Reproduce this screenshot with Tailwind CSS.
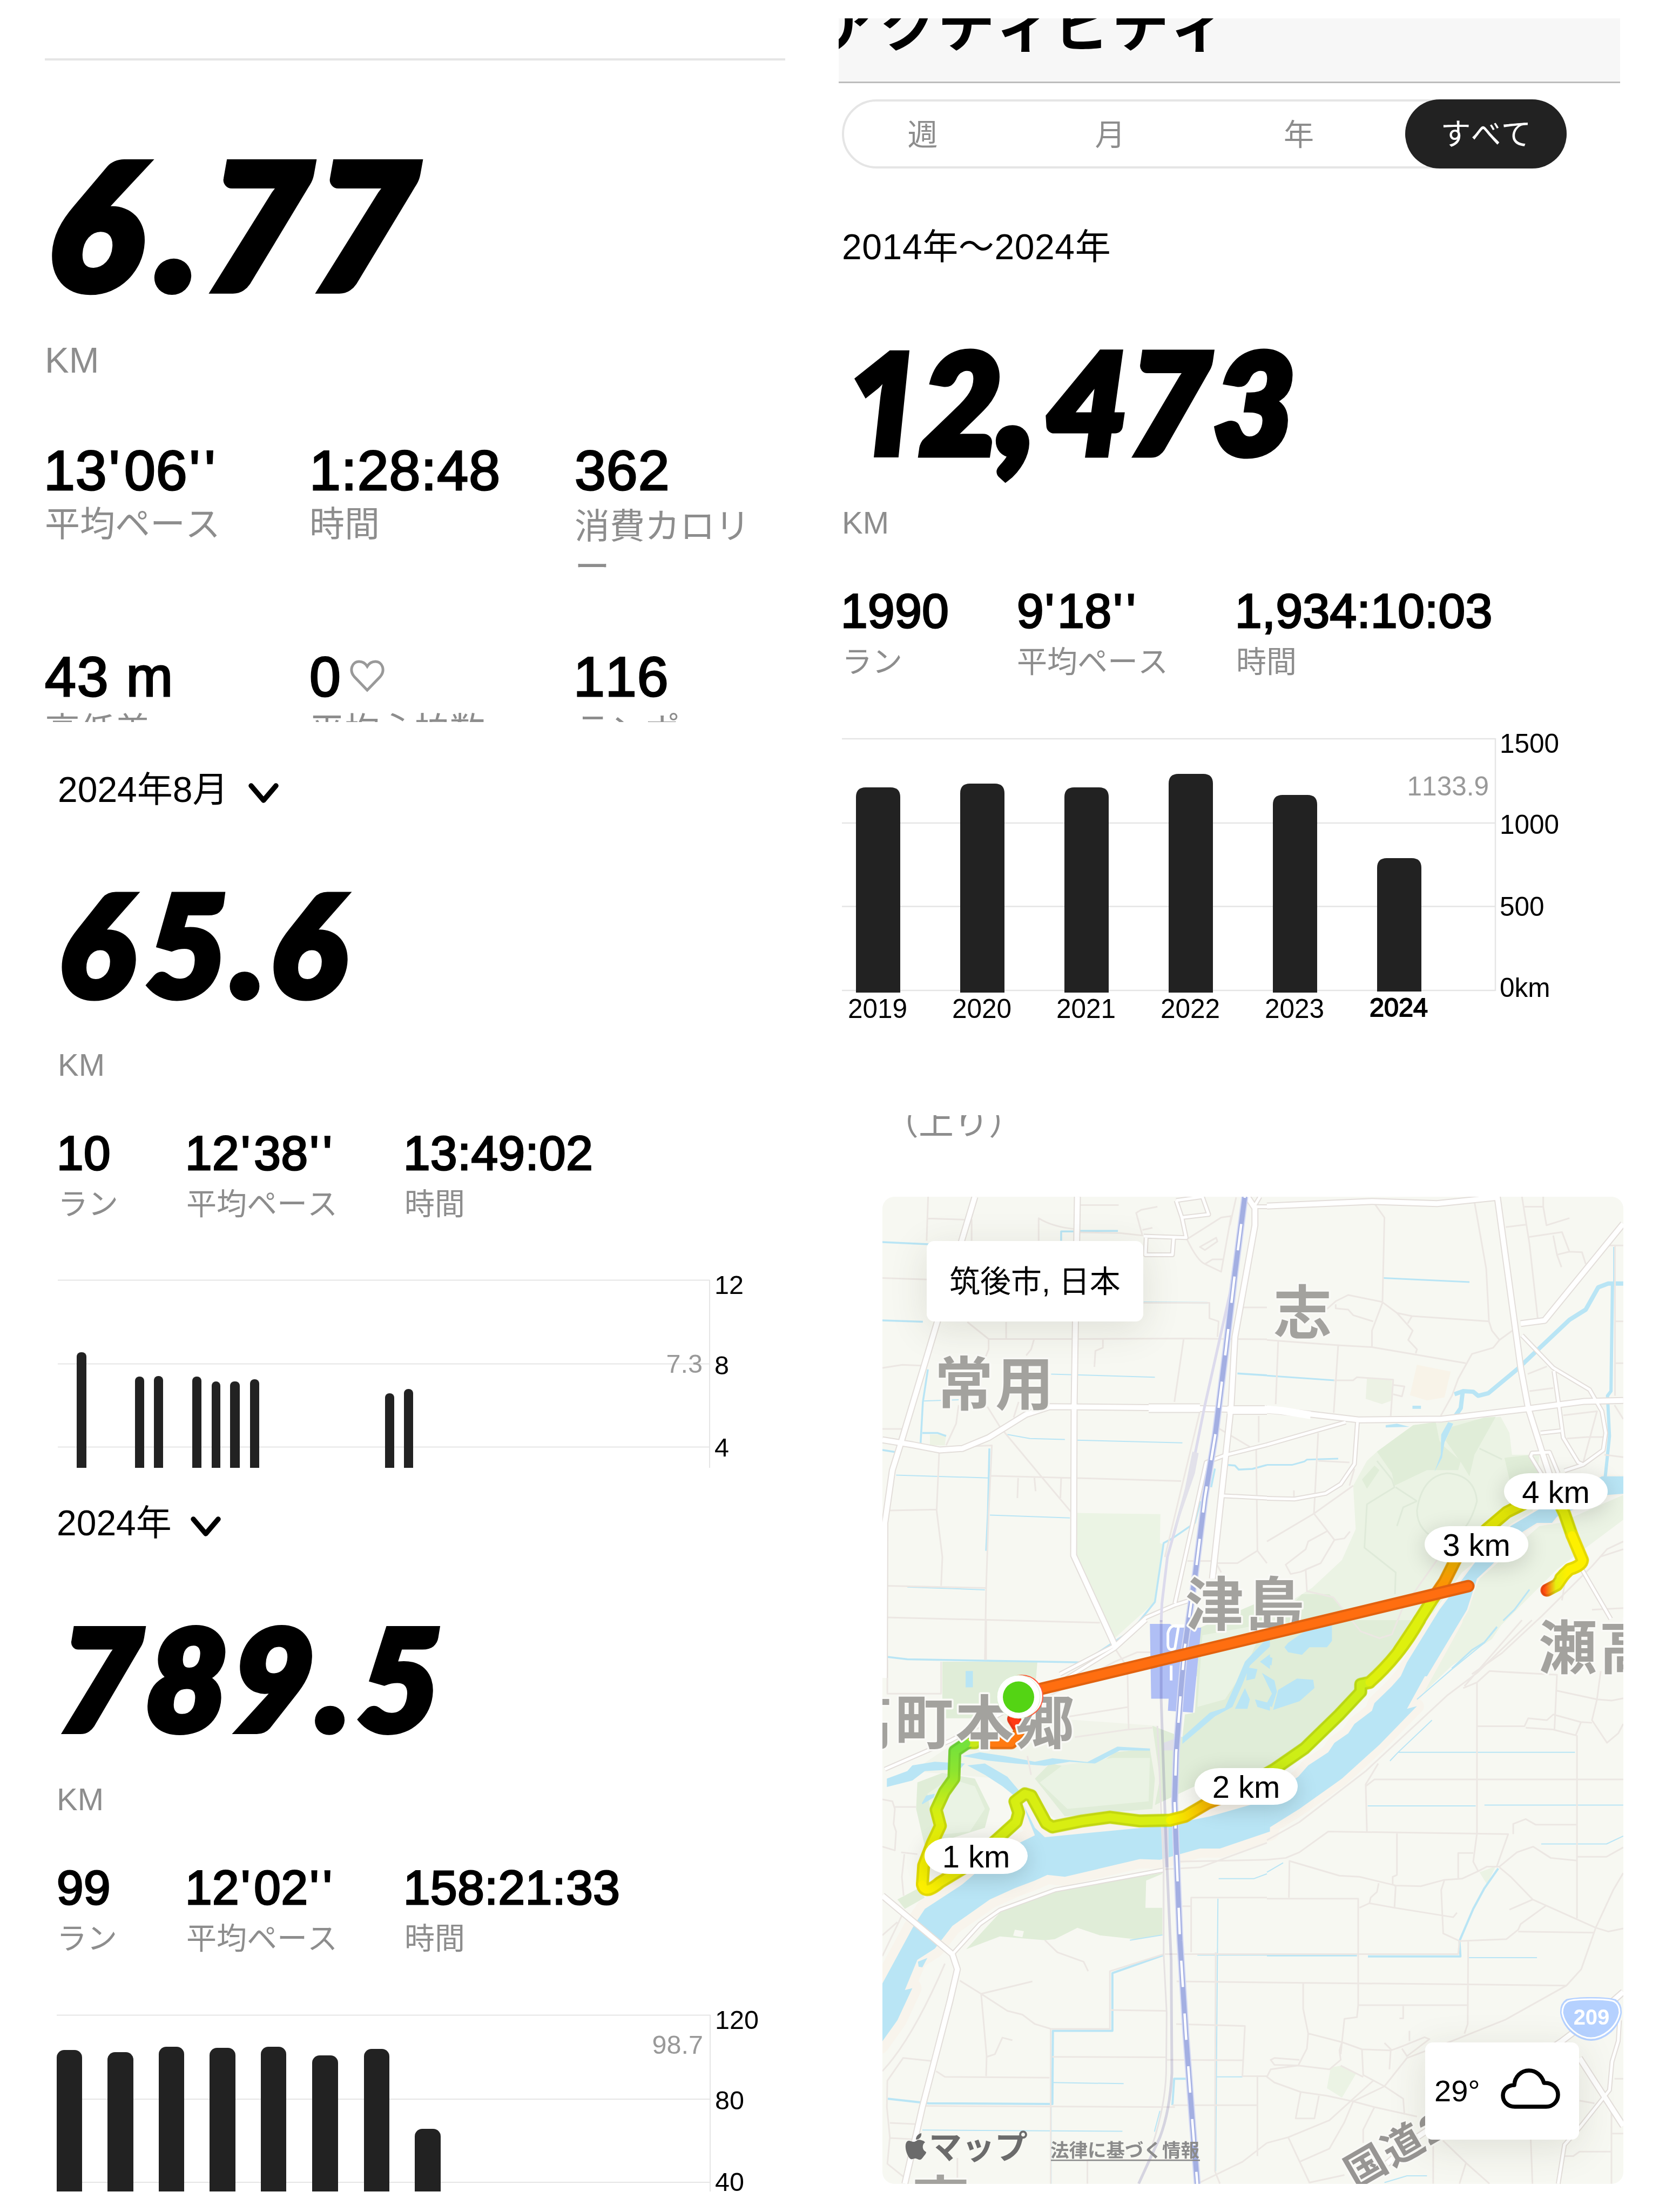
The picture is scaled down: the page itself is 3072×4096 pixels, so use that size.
<!DOCTYPE html>
<html lang="ja">
<head>
    <meta charset="UTF-8">
    <meta name="viewport" content="width=device-width, initial-scale=1.0">
    <title>アクティビティ</title>
    <script src="https://cdn.jsdelivr.net/npm/@tailwindcss/browser@4"></script>
</head>
<body class="w-[3072px] h-[4096px] overflow-hidden bg-white text-black font-['Liberation_Sans','Noto_Sans_CJK_JP',sans-serif] [font-kerning:none] whitespace-nowrap">
    <main class="flex w-[3072px] h-[4096px]">
        <div class="w-[1500px] shrink-0 flex flex-col">

            <!-- Single run -->
            <section class="h-[1337px] overflow-hidden pl-[83px] pt-[108px]">
                <div class="w-[1371px] h-1 bg-[#e5e5e5]"></div>
                <svg class="mt-[126px] w-[1400px] h-[344px] font-['Lato'] font-black italic" viewBox="83 238 1400 344" font-size="321" stroke="black" stroke-width="16" stroke-miterlimit="3">
                    <text transform="translate(0 535.7) skewX(-3)" x="86 289 379 576" y="0">6.77</text>
                </svg>
                <p class="mt-[47px] h-[76px] leading-[76px] text-[67px] text-[#8d8d8d]">KM</p>
                <div class="mt-[101px] grid grid-cols-[490px_491px_390px]">
                    <div>
                        <p class="h-[127px] leading-[130px] text-[104px] tracking-[1px] -ml-0.5 [-webkit-text-stroke:3px_black]">13<span class="tracking-[.08em] pl-[3px]">'</span>06<span class="tracking-[.08em] pl-[3px]">''</span></p>
                        <p class="leading-[75px] text-[65px] text-[#8d8d8d]">平均ペース</p>
                    </div>
                    <div>
                        <p class="h-[127px] leading-[130px] text-[104px] tracking-[1px] [-webkit-text-stroke:3px_black]">1:28:48</p>
                        <p class="leading-[75px] text-[65px] text-[#8d8d8d]">時間</p>
                    </div>
                    <div>
                        <p class="h-[131px] leading-[130px] text-[104px] tracking-[1px] [-webkit-text-stroke:3px_black]">362</p>
                        <p class="w-[335px] leading-[75px] text-[65px] text-[#8d8d8d] whitespace-normal break-all">消費カロリ<br>ー</p>
                    </div>
                </div>
                <div class="mt-[101px] grid grid-cols-[490px_491px_390px]">
                    <div>
                        <p class="h-[127px] leading-[130px] text-[104px] tracking-[2px] [-webkit-text-stroke:3px_black]">43 m</p>
                        <p class="leading-[75px] text-[65px] text-[#8d8d8d]">高低差</p>
                    </div>
                    <div>
                        <div class="flex h-[127px] gap-4">
                            <p class="leading-[130px] text-[104px] [-webkit-text-stroke:3px_black]">0</p>
                            <svg class="mt-[32px] w-[66px] h-[62px]" viewBox="0 0 66 62" fill="none" stroke="#999" stroke-width="5">
                                <path d="M33 58 L9 33 C-1 21 5 5 18 5 C25 5 30 9 33 14 C36 9 41 5 48 5 C61 5 67 21 57 33z"/>
                            </svg>
                        </div>
                        <p class="leading-[75px] text-[65px] text-[#8d8d8d]">平均心拍数</p>
                    </div>
                    <div>
                        <p class="h-[127px] leading-[130px] text-[104px] tracking-[1px] -ml-0.5 [-webkit-text-stroke:3px_black]">116</p>
                        <p class="leading-[75px] text-[65px] text-[#8d8d8d]">ランポ</p>
                    </div>
                </div>
            </section>

            <!-- Month -->
            <section class="h-[1381px] overflow-hidden pl-[107px] pt-[85px]">
                <div class="flex items-center h-[80px]">
                    <p class="w-[313px] leading-[80px] text-[66px]">2024年8月</p>
                    <svg class="ml-[39px] mt-[13px] w-[58px] h-[40px]" viewBox="0 0 58 40" fill="none" stroke="black" stroke-width="9.5" stroke-linecap="round" stroke-linejoin="round">
                        <path d="M6 6 L29 33 L52 6"/>
                    </svg>
                </div>
                <svg class="mt-[105px] w-[1393px] h-[276px] font-['Lato'] font-black italic" viewBox="107 1607 1393 276" font-size="258" stroke="black" stroke-width="13" stroke-miterlimit="3">
                    <text transform="translate(0 1845)" x="109 271 429 501" y="0">65.6</text>
                </svg>
                <p class="mt-[32px] h-[114px] leading-[114px] text-[58px] text-[#8d8d8d]">KM</p>
                <div class="mt-[51px] grid grid-cols-[238px_404px_600px]">
                    <div>
                        <p class="h-[118px] leading-[110px] text-[89px] tracking-[.6px] -ml-0.5 [-webkit-text-stroke:3px_black]">10</p>
                        <p class="leading-[64px] text-[56px] text-[#8d8d8d]">ラン</p>
                    </div>
                    <div>
                        <p class="h-[118px] leading-[110px] text-[89px] tracking-[.6px] -ml-0.5 [-webkit-text-stroke:3px_black]">12<span class="tracking-[.08em] pl-[3px]">'</span>38<span class="tracking-[.08em] pl-[3px]">''</span></p>
                        <p class="leading-[64px] text-[56px] text-[#8d8d8d]">平均ペース</p>
                    </div>
                    <div>
                        <p class="h-[118px] leading-[110px] text-[89px] tracking-[.6px] -ml-0.5 [-webkit-text-stroke:3px_black]">13:49:02</p>
                        <p class="leading-[64px] text-[56px] text-[#8d8d8d]">時間</p>
                    </div>
                </div>
                <svg class="mt-[88px] w-[1393px] h-[368px]" viewBox="107 2350 1393 368" font-size="48.500">
                    <path d="M107 2370.500H1314 M107 2525.500H1314 M107 2679.500H1314 M1314 2370V2718" stroke="#e5e5e5" stroke-width="2"/>
                    <g fill="#222">
                        <rect x="142" y="2504" width="18" height="240" rx="8"/>
                        <rect x="250" y="2549" width="17" height="240" rx="8"/>
                        <rect x="285" y="2548" width="17" height="240" rx="8"/>
                        <rect x="356" y="2549" width="17" height="240" rx="8"/>
                        <rect x="392" y="2558" width="16" height="240" rx="8"/>
                        <rect x="426" y="2558" width="18" height="240" rx="8"/>
                        <rect x="463" y="2554" width="17" height="240" rx="8"/>
                        <rect x="713" y="2580" width="17" height="240" rx="8"/>
                        <rect x="748" y="2572" width="17" height="240" rx="8"/>
                    </g>
                    <text x="1301" y="2542" text-anchor="end" fill="#999">7.3</text>
                    <text x="1323" y="2396">12</text>
                    <text x="1323" y="2545">8</text>
                    <text x="1323" y="2697">4</text>
                </svg>
            </section>

            <!-- Year -->
            <section class="h-[1341px] overflow-hidden pl-[105px] pt-[62px]">
                <div class="flex items-center h-[80px]">
                    <p class="w-[210px] leading-[80px] text-[66px]">2024年</p>
                    <svg class="ml-[37px] mt-[13px] w-[58px] h-[40px]" viewBox="0 0 58 40" fill="none" stroke="black" stroke-width="9.5" stroke-linecap="round" stroke-linejoin="round">
                        <path d="M6 6 L29 33 L52 6"/>
                    </svg>
                </div>
                <svg class="mt-[106px] w-[1395px] h-[276px] overflow-visible font-['Lato'] font-black italic" viewBox="105 2966 1395 276" font-size="258" stroke="black" stroke-width="13" stroke-miterlimit="3">
                    <text transform="translate(0 3204.500) skewX(-2)" x="107 268 427 586 662" y="0">789.5</text>
                </svg>
                <p class="mt-[33px] h-[114px] leading-[114px] text-[58px] text-[#8d8d8d]">KM</p>
                <div class="mt-[51px] grid grid-cols-[240px_404px_600px]">
                    <div>
                        <p class="h-[118px] leading-[110px] text-[89px] tracking-[.6px] [-webkit-text-stroke:3px_black]">99</p>
                        <p class="leading-[64px] text-[56px] text-[#8d8d8d]">ラン</p>
                    </div>
                    <div>
                        <p class="h-[118px] leading-[110px] text-[89px] tracking-[.6px] -ml-0.5 [-webkit-text-stroke:3px_black]">12<span class="tracking-[.08em] pl-[3px]">'</span>02<span class="tracking-[.08em] pl-[3px]">''</span></p>
                        <p class="leading-[64px] text-[56px] text-[#8d8d8d]">平均ペース</p>
                    </div>
                    <div>
                        <p class="h-[118px] leading-[110px] text-[89px] tracking-[.6px] -ml-0.5 [-webkit-text-stroke:3px_black]">158:21:33</p>
                        <p class="leading-[64px] text-[56px] text-[#8d8d8d]">時間</p>
                    </div>
                </div>
                <svg class="mt-[89px] w-[1395px] h-[347px]" viewBox="105 3712 1395 347" font-size="48.500">
                    <path d="M105 3732.500H1315 M105 3888H1315 M105 4042H1315 M1315 3732V4059" stroke="#e5e5e5" stroke-width="2"/>
                    <g fill="#222">
                        <rect x="105" y="3797" width="47" height="300" rx="14"/>
                        <rect x="199" y="3801" width="48" height="300" rx="14"/>
                        <rect x="294" y="3791" width="47" height="300" rx="14"/>
                        <rect x="388" y="3793" width="48" height="300" rx="14"/>
                        <rect x="483" y="3791" width="47" height="300" rx="14"/>
                        <rect x="578" y="3807" width="48" height="300" rx="14"/>
                        <rect x="674" y="3795" width="47" height="300" rx="14"/>
                        <rect x="768" y="3943" width="48" height="300" rx="14"/>
                    </g>
                    <text x="1302" y="3804" text-anchor="end" fill="#999">98.7</text>
                    <text x="1324" y="3758">120</text>
                    <text x="1324" y="3907">80</text>
                    <text x="1324" y="4058">40</text>
                </svg>
            </section>
        </div>

        <div class="flex-1 flex flex-col">

            <!-- All time -->
            <section class="h-[2065px] pt-[34px] pl-[53px]">
                <div class="w-[1447px] h-[120px] overflow-hidden bg-[#f7f7f7] border-b-3 border-[#bdbdbd]">
                    <p class="-ml-8 -mt-[44px] h-[118px] leading-[118px] text-[106px] tracking-[1.5px] font-bold">アクティビティ</p>
                </div>
                <div class="pl-[6px]">
                    <div class="mt-[30px] flex items-center w-[1342px] h-[128px] rounded-full border-4 border-[#e5e5e5] text-[56px] text-[#8d8d8d] text-center">
                        <p class="w-[291px] pt-1">週</p>
                        <p class="w-[403px] pt-1">月</p>
                        <p class="w-[296px] pt-1">年</p>
                        <p class="ml-auto -mr-1 w-[299px] h-[128px] leading-[130px] rounded-full bg-[#222] text-white">すべて</p>
                    </div>
                    <p class="mt-[105px] h-[80px] leading-[80px] text-[66px] tracking-[.6px]">2014年～2024年</p>
                    <svg class="mt-[105px] w-[1441px] h-[276px] overflow-visible font-['Lato'] font-black italic" viewBox="1559 602 1441 276" font-size="258" stroke="black" stroke-width="13" stroke-miterlimit="3">
                        <text class="font-['Open_Sans'] font-extrabold" transform="translate(1578 845) skewX(4) scale(.82 1)" font-size="272" stroke-width="4">1</text>
                        <text transform="translate(0 841) skewX(-1)" x="1703 1846 1937 2089 2246" y="0">2<tspan font-size="310">,</tspan>473</text>
                    </svg>
                    <p class="mt-[33px] h-[114px] leading-[114px] text-[58px] text-[#8d8d8d]">KM</p>
                    <div class="mt-[51px] grid grid-cols-[324px_406px_600px]">
                        <div>
                            <p class="h-[118px] leading-[110px] text-[89px] tracking-[.6px] -ml-0.5 [-webkit-text-stroke:3px_black]">1990</p>
                            <p class="leading-[64px] text-[56px] text-[#8d8d8d]">ラン</p>
                        </div>
                        <div>
                            <p class="h-[118px] leading-[110px] text-[89px] tracking-[.6px] [-webkit-text-stroke:3px_black]">9<span class="tracking-[.07em] pl-0.5">'</span>18<span class="tracking-[.08em] pl-[3px]">''</span></p>
                            <p class="leading-[64px] text-[56px] text-[#8d8d8d]">平均ペース</p>
                        </div>
                        <div>
                            <p class="h-[118px] leading-[110px] text-[89px] tracking-[.6px] -ml-0.5 [-webkit-text-stroke:3px_black]">1,934:10:03</p>
                            <p class="leading-[64px] text-[56px] text-[#8d8d8d]">時間</p>
                        </div>
                    </div>
                    <svg class="mt-[90px] w-[1441px] h-[560px]" viewBox="1559 1348 1441 560" font-size="49.500">
                        <path d="M1559 1368H2769 M1559 1524H2769 M1559 1678.500H2769 M1559 1834H2769 M2769 1367V1835" stroke="#e5e5e5" stroke-width="2.500"/>
                        <g fill="#222">
                            <path d="M1585 1838V1476q0-18 18-18h46q18 0 18 18v362z"/>
                            <path d="M1778 1838V1469q0-18 18-18h46q18 0 18 18v369z"/>
                            <path d="M1971 1838V1476q0-18 18-18h46q18 0 18 18v362z"/>
                            <path d="M2164 1838V1451q0-18 18-18h46q18 0 18 18v387z"/>
                            <path d="M2357 1838V1490q0-18 18-18h46q18 0 18 18v348z"/>
                            <path d="M2550 1836V1607q0-18 18-18h46q18 0 18 18v229z"/>
                        </g>
                        <text x="2757" y="1473" text-anchor="end" fill="#999">1133.9</text>
                        <text x="2777" y="1394">1500</text>
                        <text x="2777" y="1544">1000</text>
                        <text x="2777" y="1696">500</text>
                        <text x="2777" y="1846">0km</text>
                        <g text-anchor="middle">
                            <text x="1625" y="1885">2019</text>
                            <text x="1818" y="1885">2020</text>
                            <text x="2011" y="1885">2021</text>
                            <text x="2204" y="1885">2022</text>
                            <text x="2397" y="1885">2023</text>
                            <text x="2590" y="1882" font-size="48.500" stroke="black" stroke-width="1.800">2024</text>
                        </g>
                    </svg>
                </div>
            </section>

            <!-- Route map -->
            <section class="pl-[134px]">
                <div class="h-[151px] overflow-hidden">
                    <p class="ml-[2px] -mt-[27px] leading-[80px] text-[65px] text-[#8d8d8d]">（上り）</p>
                </div>
                <div class="relative w-[1372px] h-[1828px] rounded-[22px] overflow-hidden bg-[#f7f8f2]">
                    <svg class="w-full h-full [&_path]:[vector-effect:non-scaling-stroke]" viewBox="1634 2216 1372 1828" fill="none" stroke-linejoin="round">
                        <defs>
                            <linearGradient id="west" gradientUnits="userSpaceOnUse" x1="0" y1="330" x2="0" y2="620">
                                <stop offset="0" stop-color="#74e23c"/>
                                <stop offset=".25" stop-color="#8fe52f"/>
                                <stop offset=".6" stop-color="#d3ee14"/>
                                <stop offset="1" stop-color="#f5f000"/>
                            </linearGradient>
                            <linearGradient id="mid" gradientUnits="userSpaceOnUse" x1="1180" y1="0" x2="1400" y2="0">
                                <stop offset="0" stop-color="#f2f200"/>
                                <stop offset="1" stop-color="#ffa200"/>
                            </linearGradient>
                            <linearGradient id="loop" gradientUnits="userSpaceOnUse" x1="200" y1="0" x2="640" y2="0">
                                <stop offset="0" stop-color="#fdf000"/>
                                <stop offset=".7" stop-color="#d6ee12"/>
                                <stop offset="1" stop-color="#d8ee12"/>
                            </linearGradient>
                            <linearGradient id="north" gradientUnits="userSpaceOnUse" x1="0" y1="1340" x2="0" y2="1080">
                                <stop offset="0" stop-color="#e2f00c"/>
                                <stop offset=".15" stop-color="#ff8a08"/>
                                <stop offset=".5" stop-color="#f5b400"/>
                                <stop offset="1" stop-color="#dcea0a"/>
                            </linearGradient>
                            <linearGradient id="finish" gradientUnits="userSpaceOnUse" x1="1110" y1="0" x2="1200" y2="0">
                                <stop offset="0" stop-color="#ff4b10"/>
                                <stop offset=".5" stop-color="#e6ee10"/>
                                <stop offset="1" stop-color="#fdf000"/>
                            </linearGradient>
                            <g id="nw-river" transform="translate(1620 3000) scale(.463 .699)">
                                <path d="M20 975 L155 810 L200 765 L350 700 L500 615 L640 570 L610 520 L595 490 L640 550 L680 575 L1150 545 L1340 520 L1580 475 V560 L1380 605 L1300 605 L1140 635 L1060 633 L760 680 L690 675 L640 690 L560 710 L460 740 L310 810 L240 870 L170 900 L120 980 L150 975 L90 1060 L20 1125z"/>
                            </g>
                            <g id="se-river" transform="translate(2346 3000) scale(.463 .699)">
                                <path d="M-10 480 L70 440 L125 415 L165 385 L245 350 L270 325 L325 300 L350 275 L420 240 L430 220 L500 175 L540 145 L600 80 L670 0 H755 L560 235 L600 228 L450 330 L300 420 L130 500 L-10 558z"/>
                            </g>
                            <g id="ne-river" transform="translate(2346 2200) scale(.463 .574)">
                                <path d="M535 1575 L560 1530 L690 1360 L830 1210 L975 1090 L1080 1040 L1340 930 H1440 V985 L1360 990 L1160 1060 L1140 1080 L1080 1080 L1020 1110 L900 1215 L840 1260 L800 1360 L640 1575z"/>
                            </g>
                            <g id="route" stroke-linecap="round">
                                <g transform="translate(1620 3000) scale(.463 .699)">
                                    <path stroke="#ff3a16" d="M555 262 L572 280"/>
                                    <path stroke="#ff7a10" d="M578 300 L545 325 L470 325"/>
                                    <path stroke="#c8e818" d="M400 325 L370 325"/>
                                    <path stroke="url(#west)" d="M365 327 L320 347 L316 420 L278 455 L245 502 L262 545 L230 590 L195 650 L190 700"/>
                                    <path stroke="url(#loop)" d="M190 700 Q198 730 260 695 L360 655 L490 580 L565 535 L575 510 L560 480 L600 460 L625 465 L685 538 L710 548 L830 532 L940 522 L1060 532 L1180 530"/>
                                    <path stroke="url(#mid)" d="M1180 530 L1240 520 L1330 485 L1480 445"/>
                                </g>
                                <g transform="translate(2346 3000) scale(.463 .699)">
                                    <path stroke="#cdee16" d="M-50 425 L30 395 L150 340 L290 250 L375 190 L375 170 L410 165"/>
                                    <path stroke="#def00e" d="M410 165 Q530 95 610 0"/>
                                </g>
                                <g transform="translate(2346 2200) scale(.463 .574)">
                                    <path stroke="#def00e" d="M530 1490 L600 1405 L655 1335"/>
                                    <path stroke="url(#north)" d="M655 1335 L710 1270 L760 1190 L880 1100"/>
                                    <path stroke="#e4e808" d="M880 1100 L960 1045 L1060 1005"/>
                                    <path stroke="#e4ee08" d="M1160 1000 L1190 1050 L1220 1120"/>
                                    <path stroke="#fdf000" d="M1220 1120 L1262 1200 Q1260 1218 1210 1230 L1175 1258"/>
                                    <path stroke="url(#finish)" d="M1190 1245 L1160 1280 L1120 1297"/>
                                </g>
                            </g>
                        </defs>

                        <!-- parks -->
                        <g transform="translate(1620 2200) scale(.463 .574)">
                            <path fill="#ebf4e4" d="M805 1048 L1142 1052 L1140 1145 L1155 1150 L1120 1335 L955 1455 L800 1185z"/>
                            <path fill="#edf3e4" d="M220 795 H285 L280 830 H220z"/>
                        </g>
                        <g transform="translate(2346 2200) scale(.463 .574)">
                            <path fill="#ebf3e4" d="M585 765 L440 850 L400 880 L345 960 L355 1100 L300 1200 L180 1290 L0 1380 L-200 1420 L-330 1568 L450 1568 L640 1400 L780 1240 L1060 1060 L1090 860 L980 860 L970 790 L935 738z"/>
                            <path fill="#ebf3e4" d="M1425 990 L1170 1080 L1090 1090 L850 1260 L760 1420 L640 1568 L740 1540 L900 1440 L1160 1230 L1425 1070z"/>
                            <path fill="#e0edd8" d="M440 850 L585 765 L675 755 L690 815 L710 835 L775 880 L765 910 L640 910 L510 960 L500 920z M715 815 L740 770 L870 740 L915 738 L830 860 L810 930 L780 890z M950 870 L1060 860 L1110 950 L970 940z M380 940 L430 895 L450 910 L400 970z"/>
                            <path fill="#e0edd8" d="M140 1310 L250 1310 L380 1430 L450 1450 L520 1440 L570 1420 L480 1510 L400 1575 H-330 L0 1430z"/>
                            <path fill="#ecf2e4" d="M400 615 H500 V685 L460 697 L395 680z"/>
                            <path fill="#f8f3e8" d="M600 570 L735 592 L710 675 L640 685 L572 668z"/>
                        </g>
                        <g transform="translate(1620 3000) scale(.463 .699)">
                            <path fill="#e0edd8" d="M270 110 H650 L640 190 L560 260 H270z"/>
                            <path fill="#f1f4ea" d="M490 250 L1130 280 L1140 520 L750 540 L500 420 L150 400z"/>
                            <path fill="#e0edd8" d="M1300 20 L1580 -60 V440 L1280 440 L1120 490 L1140 420 L1110 280 L1230 310 L1240 250 L1280 245z M170 430 L270 405 L400 420 L460 500 L440 550 L200 600 L165 500z M640 420 L700 380 L860 400 L960 350 L1100 340 L1120 420 L1110 500 L760 520z"/>
                            <path fill="#eaf3e4" d="M210 460 L300 420 L400 440 L440 500 L380 560 L240 570z M660 430 L750 385 L950 365 L1100 365 L1095 480 L770 500z M1310 40 L1560 10 L1480 130 L1400 210 L1290 230z"/>
                            <path fill="#e0edd8" d="M365 872 L500 775 L700 718 L1150 670 V835 L1040 845 L900 835 L810 815 L720 845 L680 848 L500 838z M90 740 L170 712 L200 735 L120 765z"/>
                            <path fill="#f7f8f2" d="M1085 690 L1150 672 V762 H1082z M560 820 L596 824 L590 840 L553 836z"/>
                        </g>
                        <g transform="translate(2346 3000) scale(.463 .699)">
                            <path fill="#e0edd8" d="M-30 20 L200 0 H640 L540 90 L380 190 L150 340 L-30 420z"/>
                            <path fill="#ebf3e4" d="M755 0 H950 L900 50 L740 120 L560 235z M850 668 L915 652 L880 700z M255 1185 L300 1180 L358 1200 L300 1265 L240 1240z"/>
                        </g>

                        <!-- river banks and water -->
                        <g fill="#f8f4ec" stroke="#f8f4ec">
                            <use href="#nw-river" stroke-width="34"/>
                            <use href="#se-river" stroke-width="26"/>
                            <use href="#ne-river" stroke-width="6"/>
                        </g>
                        <g fill="#b9e5f5">
                            <use href="#nw-river"/>
                            <use href="#se-river"/>
                            <use href="#ne-river"/>
                            <g transform="translate(1620 3000) scale(.463 .699)">
                                <path d="M48 420 L130 400 L150 385 L240 375 L360 380 L340 395 L200 400 L150 425 L48 442z M350 360 L420 350 L520 360 L640 375 L710 366 L850 376 L970 335 L1100 340 L1100 346 L980 345 L880 380 L780 375 L680 386 L560 380 L450 372z M370 385 L440 380 L530 415 L600 470 L585 480 L510 440 L440 410z M363 135 H392 V178 H363z M188 485 L205 465 L240 460 L235 470 L190 488z M172 905 L210 895 L190 920 L175 918z"/>
                                <path d="M1230 310 L1340 245 L1400 232 L1445 165 L1480 110 L1580 40 V70 L1500 120 L1470 170 L1430 230 L1360 255 L1230 328z M1490 125 L1530 130 L1520 155 L1485 160z M1540 110 L1580 90 V130z M1480 180 L1500 210 L1490 235 L1440 235z M1520 210 L1580 220 V240 L1530 230z"/>
                            </g>
                            <g transform="translate(2346 3000) scale(.463 .699)">
                                <path d="M85 60 L150 30 L260 10 L260 55 L240 72 L170 72 L140 92 L85 85 L70 72z M45 185 L120 155 L185 158 L190 180 L130 215 L25 238z M0 95 L22 100 L18 120 L0 115z M-20 140 L30 160 L40 190 L20 230 L-5 225 L20 195z"/>
                            </g>
                            <g transform="translate(2346 2200) scale(.463 .574)">
                                <path d="M725 755 L745 760 L722 800 L710 820 L700 870 L670 915 L695 860 L697 795z M475 765 L520 760 L570 770 L475 772z M582 702 H616 V712 H582z"/>
                            </g>
                        </g>
                        <g stroke="#b9e5f5">
                            <g transform="translate(2346 2200) scale(.463 .574)">
                                <path stroke-width="8" d="M750 665 L785 655 L825 657 L845 670 L885 662 L1000 585 L1210 425 L1275 392 L1325 320 L1365 308 H1425 M783 657 L775 710 L745 745"/>
                                <path stroke-width="6" d="M1382 308 L1376 655 L1362 670 L1370 800 L1352 940"/>
                                <path stroke-width="3" d="M1388 190 V310 M465 290 L810 303 M0 605 L270 620 M0 893 H100 L150 882 L160 876 L285 873 M1050 1295 L990 1360 L945 1395 M920 1415 L870 1465 L820 1490 L740 1550"/>
                            </g>
                            <g transform="translate(1620 2200) scale(.463 .574)">
                                <path stroke-width="3.500" d="M30 174 L215 181 M30 427 L192 431 M745 170 V140 H800 M820 138 H972 M212 585 L192 690 L183 822 M190 790 H250 L285 800 M458 840 L452 1050 L445 1170 M1075 369 L1330 370 M1450 598 L1568 604 M30 845 L85 852 M1408 893 L1440 895 L1455 908 L1510 906 L1568 893 M1360 905 L1345 965 M1302 1010 L1280 1080 L1190 1130 L1155 1145 L1120 1335 L1030 1425 L880 1505 M48 1512 L130 1520 L400 1524 L830 1530"/>
                                <path stroke-width="2" d="M705 600 L1120 610 M530 795 L620 808 L760 811 M805 813 L1230 822 M85 926 L455 935 M460 1055 L780 1064 M130 1287 L440 1296 M787 610 V690 M192 687 L335 683"/>
                            </g>
                            <g transform="translate(1620 3000) scale(.463 .699)">
                                <path stroke-width="4" d="M1152 888 L950 935 L950 1088 L712 1088 L710 1282 L215 1280 L52 1268 M1290 886 H1568 M1190 1285 L1197 1215 H1250"/>
                                <path stroke-width="2" d="M710 1225 L995 1228 M190 1351 L990 1354 M1372 738 L1366 1210 H1470 M1366 1210 L1363 1460 M1375 685 H1515 L1568 672 M1140 1300 L1118 1355 M1020 848 L1150 834 M705 1290 V1493"/>
                            </g>
                            <g transform="translate(2346 3000) scale(.463 .699)">
                                <path stroke-width="4" d="M0 888 H360 M404 891 H774 L770 850 L825 765 L870 710 L925 658"/>
                                <path stroke-width="2" d="M660 265 L525 350 L492 373 M525 350 H1232 M403 492 H835 M870 490 H1425 M1097 593 H1358 L1425 572 M808 894 H1080 M0 668 L65 643 M470 1490 L560 1472 H640 M920 20 L870 60 L740 130 L600 210"/>
                            </g>
                        </g>

                        <!-- minor roads -->
                        <g stroke="#ece7e3" stroke-width="3">
                            <g transform="translate(1620 2200) scale(.463 .574)">
                                <path d="M213 28 L207 170 M213 98 L358 102 M387 100 V170 M30 290 L207 295 M820 55 H975 M655 170 V97 Q710 125 800 132 M820 143 L980 145 L1070 153 L1045 80 L1065 70 L1130 60 M1070 135 L1110 128 M1248 165 L1385 95 L1425 90 L1385 270 L1320 245 Q1290 235 1248 165 M1300 190 L1365 160 L1370 172 L1320 200z M1320 245 L1350 230 H1395 M1445 30 L1420 120 M1465 385 H1568"/>
                                <path d="M370 432 L455 487 L455 520 L435 560 M525 432 V485 M455 487 H800 L1235 485 L1568 488 M637 487 L625 520 L605 540 M912 487 V515 L882 525 L878 577 M1235 487 L1198 690 M1075 370 H1338 V420 L1375 430 L1370 480 M30 580 L110 570 L200 573 M335 700 L325 760 L285 830 M450 705 L500 770 L665 930 L785 1045 M575 690 L555 740 M30 777 H110"/>
                                <path d="M257 855 L247 1040 L270 1190 L265 1283 M60 1040 L247 1037 M50 1283 L445 1290 L455 1050 L468 830 L320 835 M460 928 L785 935 L1225 945 M573 935 L570 1000 M638 935 L643 978 M745 935 L742 1000 M50 1385 L900 1402 M445 1290 L440 1522 M1300 720 L1160 1190 M1525 840 L1530 1170 L1450 1210 H1365 L1385 1240 M1250 1203 H1365 M1375 775 L1500 835 M1535 735 V820 M1530 1170 L1568 1210"/>
                            </g>
                            <g transform="translate(2346 2200) scale(.463 .574)">
                                <path d="M430 50 L470 95 L462 370 L420 460 V513 M830 45 L877 260 L888 430 L900 460 L930 490 L990 455 M1020 28 L1050 180 L1083 420 M1030 60 H1105 L1118 120 L1210 97 M1105 28 V60 M955 126 L1035 118 M1045 158 L1180 142 L1210 205 L1260 207 L1275 245 M1145 153 L1160 215 L1178 255 M1160 215 L1210 205 M1392 185 V670 M1360 185 H1425 M1392 430 H1425 M1392 565 H1425"/>
                                <path d="M240 390 L275 365 L325 345 L460 367 L520 403 L580 413 L888 430 M520 403 L583 460 L565 490 L600 520 L595 533 M580 413 L563 437 M275 375 V388 L325 392 L345 410 L425 430 M0 490 L285 507 L420 513 L795 565 M45 495 L35 697 M285 507 L267 725 M267 620 H345 L360 610 L505 618 L495 735 M505 635 L550 640 L540 672 L505 665 M930 490 L905 515 L820 535 L765 615 L740 670 L695 735"/>
                                <path d="M205 790 L188 1050 L0 1140 M205 880 L330 885 M188 1050 L270 1135 L215 1210 L155 1230 L160 1300 L265 1320 L375 1430 L450 1452 L500 1440 L540 1360 L680 1200 M270 1135 L310 1130 L332 1108 M245 1105 L165 1140 L155 1165 L75 1215 L95 1245 L135 1238 L215 1210 M345 960 L310 980 L188 1050 M350 905 L330 960 M108 975 V1000 M1043 600 L1120 575 M1050 655 L1145 645 M1185 733 L1320 720 L1265 885 M1200 808 L1280 803 H1345 M1350 860 L1425 868 M1390 700 L1425 745"/>
                                <path stroke="#dfead9" d="M440 880 L500 940 L510 965 L400 1020 L390 1160 L515 1240 L512 1310 M515 965 L600 1010 M600 1040 Q620 930 720 920 Q830 925 840 1010 Q800 1130 700 1140 Q600 1110 600 1040 M850 840 L940 875 M520 1090 L545 1030 L600 1010"/>
                                <path d="M1425 1140 L1360 1165 L1300 1220 L1100 1380 L940 1500 L820 1568 M1425 1165 L1330 1190 M1300 1360 L1425 1355 M1180 1330 L1190 1280"/>
                            </g>
                            <g transform="translate(1620 3000) scale(.463 .699)">
                                <path d="M50 105 V195 H265 V110 M445 0 V105 M960 75 L1010 125 L1015 290 M640 270 L1015 230 M800 310 L1010 290 L1110 285 M700 200 L960 110 L1050 85 L1110 85 M30 475 L70 480 L80 500 L75 540 L85 560 L80 610 L30 600 M80 495 L165 495 M105 615 L170 620 M118 620 L108 680 L115 730 M30 890 L110 780 M30 835 L90 800 M610 360 L625 410"/>
                                <path d="M30 1195 Q150 1110 280 910 M340 955 L425 990 L630 957 M425 990 L447 1155 L445 1208 M447 1157 L480 1150 L510 1106 L550 1113 M425 990 L530 1035 L590 1045 L640 1070 L705 1083 H940 V930 L1155 885 M680 848 L730 880 L835 905 L853 930 M245 1195 L280 1210 L698 1212 M703 1083 V1493 M710 1157 L1165 1158 M945 1033 L1165 1035 M230 1168 L113 1160 L50 1220 L48 1290 L60 1370 L50 1440 L115 1475 M60 1332 L165 1335 M60 1372 L150 1375 M200 1287 L1200 1290 M330 1425 V1493 M850 1430 V1493 M850 1430 H1270"/>
                                <path d="M1160 660 L1300 655 L1568 590 M1160 885 H1568 M1265 880 V735 H1568 M1230 758 H1265 M1207 957 L1568 960 M1205 1070 L1480 1075 L1470 1208 H1568 M1165 1165 L1470 1166 M1190 1285 H1530 V1210 M1530 1285 V1420 M1363 880 L1360 1460 L1380 1493 M1290 1493 L1470 1435 L1568 1385 M1200 640 L1568 635"/>
                            </g>
                            <g transform="translate(2346 3000) scale(.463 .699)">
                                <path d="M0 583 L130 535 L395 400 L720 200 L840 140 L1060 0 M1020 0 L790 175 M785 180 L840 165 L890 135 L1160 145 L1150 290 L1035 285 M840 165 V565 M840 281 H1030 L1045 260 L1120 265 L1145 250 L1255 270 L1300 272 M1145 290 L1235 305 L1255 272 M1160 187 L1320 210 L1380 213 L1425 207 M1335 135 L1320 210 L1300 265 L1360 325 L1405 300 L1425 275 M1240 305 V790 M395 440 L430 422 H1425 M445 380 L395 435 L400 562 M0 635 L75 630 L130 615 L245 560 L965 567 L918 655 M985 567 V540 L1035 527 L1075 542 H1240 M840 565 L825 640 L845 665 L780 685 L710 688 L615 705 L515 703 L370 680 L290 677 L90 638 L88 735 M765 685 V617 H825"/>
                                <path d="M845 665 L880 653 H930 L1000 615 L1065 600 L1135 630 L1240 637 M1240 627 H1358 L1425 602 M930 655 L975 680 L1063 740 L1315 815 L1365 825 L1425 817 M1063 740 L970 767 M1115 757 L1015 805 L1005 820 L958 845 L770 850 L765 885 H0 M1005 825 L1310 828 M1425 670 L1385 715 L1315 815 L1257 925 L1198 968 L955 1058 L740 1115 L560 1160 L470 1235 M710 688 L697 715 L705 830 L770 850 M520 565 V675 L503 680 V700 L515 705 L510 762 L410 750 L370 762 M447 697 L440 720 L415 735 L410 750 M510 762 L745 787 L760 775 M0 738 H365 V1020 L360 1052 L310 1056 L295 1150 M0 960 L800 965 L1198 968 M365 1020 H800 M805 850 L803 1070 L790 1095"/>
                                <path d="M145 962 V1030 L165 1095 L300 1118 L380 1137 L495 1140 L545 1128 L630 1105 L650 1110 L560 1155 L540 1135 M165 1095 L160 1135 L125 1180 L30 1178 L15 1165 L30 1160 L130 1165 M300 1118 L290 1140 L295 1165 L250 1190 L125 1180 L15 1190 L0 1210 L30 1225 L135 1250 L240 1260 L345 1275 L470 1235 L545 1268 L550 1310 M380 1137 L385 1205 L470 1235 M295 1180 L385 1210 M495 1140 L490 1190 M470 1120 L500 1140 M570 1088 V1115 M545 1022 V1055 H530 M135 1250 L115 1320 L190 1320 L208 1260 M425 1220 L250 1325 L85 1370 L0 1385 M85 1370 L170 1490 L310 1470 M130 1435 L250 1400 L310 1330 L345 1275 L430 1290 L600 1315 M430 1290 L385 1350 V1385 M665 1376 V1493 M700 1376 L800 1440 L890 1493 M795 1440 L770 1493 M1055 1376 L1062 1493 M1185 1420 H1225 L1250 1408 H1375 M1378 1300 V1493 M1378 1360 H1425 M1390 1215 H1425 M1250 1273 L1310 1280"/>
                            </g>
                        </g>

                        <!-- main roads, casing then fill -->
                        <g stroke="#e3deda" stroke-width="13">
                            <g transform="translate(1620 2200) scale(.463 .574)">
                                <path d="M400 28 L105 820 L70 910 L40 1080 L38 1580 M810 28 L797 700 L795 1185 L960 1475 M30 812 L150 828 L260 845 L350 840 L455 805 L605 730 L700 705 L1100 708 L1568 716 M1490 28 L1520 65 L1520 120 L1440 480 L1425 700 L1350 1260"/>
                                <path stroke-width="18" d="M1095 710 H1300 M1410 716 H1568"/>
                                <path stroke-width="9" d="M1568 828 L1400 862 L1325 885 L1200 1340 M1568 1000 L1380 992 M740 1568 L960 1475 L1085 1385 L1200 1345 L1260 1330 M1205 40 L1310 28 L1335 85 L1228 95 L1205 40 M1228 95 L1245 160 L1075 155 M1085 160 L1082 215 L1190 215 L1195 160 M1520 60 H1568 M1540 28 L1515 62"/>
                            </g>
                            <g transform="translate(2346 2200) scale(.463 .574)">
                                <path d="M0 58 L420 43 L680 50 L920 30 M920 20 L1015 580 L1045 710 L1100 850 L1145 960 M1425 115 L1110 427 L1015 437 M0 716 L180 730 L370 748 L700 745 L1040 712 L1270 688 L1425 685"/>
                                <path stroke-width="9" d="M1020 475 L1145 580 L1290 650 L1340 720 L1355 790 L1345 845 L1265 892 L1190 912 M1148 590 L1170 715 L1185 805 L1245 885 L1265 892 M1095 790 L1175 783 M1100 925 L1055 865 L1060 855 L1130 852 L1165 920 M0 828 L315 755 M362 755 L350 890 L295 955 L235 985 L110 1003 L0 1001 M1260 1230 L1375 1390"/>
                            </g>
                            <g transform="translate(1620 3000) scale(.463 .699)">
                                <path d="M30 730 L310 885 L330 925 L300 1010 L190 1290 L120 1493"/>
                                <path stroke-width="9" d="M40 395 L300 320 L740 165 L960 75 L1085 0 M905 -10 L960 75 M310 885 L420 805 L500 768 L720 715 L1155 662"/>
                            </g>
                            <g transform="translate(2346 3000) scale(.463 .699)">
                                <path d="M1425 985 L1330 1040 L1180 1115 L600 1370 L480 1440 M1250 1160 L1425 1340"/>
                                <path stroke-width="9" d="M1410 1060 L1405 1115 L1380 1170 L1370 1245 L1250 1345 L1190 1390 L1165 1493"/>
                            </g>
                        </g>
                        <g stroke="white" stroke-width="9">
                            <g transform="translate(1620 2200) scale(.463 .574)">
                                <path d="M400 28 L105 820 L70 910 L40 1080 L38 1580 M810 28 L797 700 L795 1185 L960 1475 M30 812 L150 828 L260 845 L350 840 L455 805 L605 730 L700 705 L1100 708 L1568 716 M1490 28 L1520 65 L1520 120 L1440 480 L1425 700 L1350 1260"/>
                                <path stroke-width="14" d="M1095 710 H1300 M1410 716 H1568"/>
                                <path stroke-width="5" d="M1568 828 L1400 862 L1325 885 L1200 1340 M1568 1000 L1380 992 M740 1568 L960 1475 L1085 1385 L1200 1345 L1260 1330 M1205 40 L1310 28 L1335 85 L1228 95 L1205 40 M1228 95 L1245 160 L1075 155 M1085 160 L1082 215 L1190 215 L1195 160 M1520 60 H1568 M1540 28 L1515 62"/>
                            </g>
                            <g transform="translate(2346 2200) scale(.463 .574)">
                                <path d="M0 58 L420 43 L680 50 L920 30 M920 20 L1015 580 L1045 710 L1100 850 L1145 960 M1425 115 L1110 427 L1015 437 M0 716 L180 730 L370 748 L700 745 L1040 712 L1270 688 L1425 685"/>
                                <path stroke-width="14" d="M-10 713 L60 718 L175 733"/>
                                <path stroke-width="5" d="M1020 475 L1145 580 L1290 650 L1340 720 L1355 790 L1345 845 L1265 892 L1190 912 M1148 590 L1170 715 L1185 805 L1245 885 L1265 892 M1095 790 L1175 783 M1100 925 L1055 865 L1060 855 L1130 852 L1165 920 M0 828 L315 755 M362 755 L350 890 L295 955 L235 985 L110 1003 L0 1001 M1260 1230 L1375 1390"/>
                            </g>
                            <g transform="translate(1620 3000) scale(.463 .699)">
                                <path d="M30 730 L310 885 L330 925 L300 1010 L190 1290 L120 1493"/>
                                <path stroke-width="5" d="M40 395 L300 320 L740 165 L960 75 L1085 0 M905 -10 L960 75 M310 885 L420 805 L500 768 L720 715 L1155 662"/>
                            </g>
                            <g transform="translate(2346 3000) scale(.463 .699)">
                                <path d="M1425 985 L1330 1040 L1180 1115 L600 1370 L480 1440 M1250 1160 L1425 1340"/>
                                <path stroke-width="5" d="M1410 1060 L1405 1115 L1380 1170 L1370 1245 L1250 1345 L1190 1390 L1165 1493"/>
                            </g>
                        </g>

                        <!-- station and railways -->
                        <g transform="translate(1620 3000) scale(.463 .699)">
                            <path fill="#b0bff5" d="M1100 10 H1180 L1200 20 H1305 L1272 245 L1172 240 L1175 208 H1105z"/>
                            <path stroke="white" stroke-width="5" d="M1215 15 L1200 75 Q1170 85 1172 60 V35 Q1180 10 1215 15 H1260 M1185 120 V160"/>
                            <path fill="#dfdfe8" d="M1155 325 L1195 315 V345 L1155 345z M1150 550 H1175 V655 H1160z"/>
                        </g>
                        <g stroke="#dcdaec" stroke-width="5">
                            <path transform="translate(1620 2200) scale(.463 .574)" d="M1445 200 L1420 340 L1320 700 L1270 900 L1170 1190 L1148 1340 L1145 1400"/>
                            <path fill="#e2e1ea" stroke="none" transform="translate(1620 2200) scale(.463 .574)" d="M1270 850 L1295 855 L1280 920 L1190 1130 L1240 970z"/>
                            <path class="mix-blend-multiply" transform="translate(1620 3000) scale(.463 .699)" d="M1145 0 V210 L1165 600 L1185 900 L1188 1200 Q1180 1300 1140 1370 L1055 1493"/>
                        </g>
                        <path stroke="#e6e2e2" stroke-width="3" transform="translate(1620 3000) scale(.463 .699)" d="M1130 280 L1155 660 L1155 885 L1167 1040 L1165 1200 Q1160 1290 1110 1390"/>
                        <path stroke="#d5daf3" stroke-width="13" d="M2305 2216 L2287 2355 L2270 2499 L2250 2659 L2231 2774 L2213 2918 L2194 3050 L2187 3126 L2178 3245 L2175 3336 L2178 3420 L2185 3594 L2196 3769 L2208 3930 L2217 4044"/>
                        <path stroke="#a3afe2" stroke-width="9" d="M2305 2216 L2287 2355 L2270 2499 L2250 2659 L2231 2774 L2213 2918 L2194 3050 L2187 3126 L2178 3245 L2175 3336 L2178 3420 L2185 3594 L2196 3769 L2208 3930 L2217 4044"/>
                        <path stroke="white" stroke-width="4.500" stroke-dasharray="49 49" stroke-dashoffset="-51" d="M2305 2216 L2287 2355 L2270 2499 L2250 2659 L2231 2774 L2213 2918 L2194 3050 L2187 3126 L2178 3245 L2175 3336 L2178 3420 L2185 3594 L2196 3769 L2208 3930 L2217 4044"/>

                        <!-- tracked route -->
                        <use href="#route" stroke-width="24" class="brightness-90"/>
                        <use href="#route" stroke-width="15"/>

                        <!-- place names -->
                        <g fill="#a3a29e" stroke="#f9f9f6" stroke-width="7" paint-order="stroke" font-size="108" font-weight="700" letter-spacing="4">
                            <text x="1731" y="2602">常用</text>
                            <text x="2358" y="2470">志</text>
                            <text x="2195" y="3010">津島</text>
                            <text x="2849" y="3090">瀬高</text>
                            <text x="1545" y="3229">高町本郷</text>
                            <text x="1688" y="4119">高</text>
                            <text transform="translate(2510 4053) rotate(-30)" font-size="75" letter-spacing="4" fill="#979593">国道209号</text>
                        </g>

                        <path stroke="#e2620f" stroke-width="23" stroke-linecap="round" d="M1900 3134 L2719 2937"/>
                        <path stroke="#ff6e10" stroke-width="15" stroke-linecap="round" d="M1900 3134 L2719 2937"/>

                        <circle cx="1892" cy="3141" r="39" fill="white" stroke="#ff5a3c" stroke-width="2"/>
                        <circle cx="1886" cy="3142" r="40" fill="white" stroke="#d9efcf" stroke-width="1"/>
                        <circle cx="1886" cy="3142.500" r="29" fill="#54d414"/>

                        <path fill="#b5d1ff" d="M2946 3698 C2970 3698 2984 3700 2992 3702 Q3004 3710 3003 3728 C2998 3758 2970 3779 2946 3779 C2922 3779 2894 3758 2889 3728 Q2888 3710 2900 3702 C2908 3700 2922 3698 2946 3698z"/>
                        <path stroke="white" stroke-width="3" d="M2946 3702 C2968 3702 2982 3703 2989 3706 Q2999 3712 2999 3727 C2994 3754 2968 3774 2946 3774 C2924 3774 2898 3754 2893 3727 Q2893 3712 2903 3706 C2910 3703 2924 3702 2946 3702z"/>
                        <text x="2947" y="3749" text-anchor="middle" font-size="40" font-weight="700" fill="white">209</text>

                        <g fill="#6b6b6b">
                            <path d="M1706 3963 C1699 3960 1696 3966 1692 3966 C1687 3966 1684 3962 1680 3965 C1674 3970 1677 3987 1684 3996 C1688 4001 1692 3996 1696 3997 C1700 3998 1704 4002 1708 3996 C1712 3991 1715 3988 1715 3985 C1707 3981 1707 3971 1713 3967 Q1711 3964 1706 3963z M1696 3962 C1696 3955 1701 3951 1706 3950 C1707 3957 1702 3962 1696 3962z"/>
                            <text x="1720" y="3998" font-size="61" font-weight="700">マップ</text>
                            <text x="1945" y="3994" font-size="34.500" font-weight="700" fill="#8b8b8b">法律に基づく情報</text>
                            <rect x="1946" y="3999" width="276" height="2.500" fill="#8b8b8b"/>
                        </g>
                    </svg>

                    <p class="absolute left-[82px] top-[82px] w-[401px] h-[149px] pl-[42px] leading-[151px] text-[57px] rounded-[14px] bg-white shadow-[0_14px_70px_rgba(60,60,40,0.13)]">筑後市, 日本</p>
                    <p class="absolute left-[1151px] top-[512px] w-[192px] h-[67px] leading-[70px] text-center text-[58px] rounded-[24%/50%] bg-white shadow-[0_8px_40px_rgba(0,0,0,0.16)]">4 km</p>
                    <p class="absolute left-[1004px] top-[610px] w-[192px] h-[67px] leading-[70px] text-center text-[58px] rounded-[24%/50%] bg-white shadow-[0_8px_40px_rgba(0,0,0,0.16)]">3 km</p>
                    <p class="absolute left-[578px] top-[1058px] w-[191px] h-[68px] leading-[69px] text-center text-[58px] rounded-[24%/50%] bg-white shadow-[0_8px_40px_rgba(0,0,0,0.16)]">2 km</p>
                    <p class="absolute left-[78px] top-[1187px] w-[191px] h-[67px] leading-[70px] text-center text-[58px] rounded-[24%/50%] bg-white shadow-[0_8px_40px_rgba(0,0,0,0.16)]">1 km</p>
                    <div class="absolute left-[1005px] top-[1566px] w-[285px] h-[180px] pl-[17px] pr-[33px] flex items-center justify-between rounded-[14px] bg-white shadow-[0_14px_70px_rgba(60,60,40,0.13)]">
                        <p class="leading-[184px] text-[56px]">29°</p>
                        <svg class="w-[114px] h-[80px] -mt-[8px]" viewBox="0 0 114 80" fill="none" stroke="black" stroke-width="7.500" stroke-linejoin="round">
                            <path d="M28 73 H86 C99 73 108 63 108 51 C108 38 97 28 82 29 C78 15 67 6 54 6 C40 6 28 17 27 33 C14 33 6 42 6 52 C6 64 15 73 28 73z"/>
                        </svg>
                    </div>
                </div>
            </section>
        </div>
    </main>
</body>
</html>
